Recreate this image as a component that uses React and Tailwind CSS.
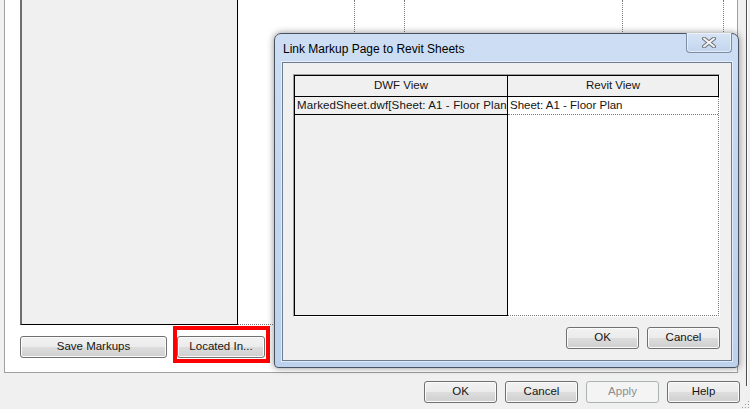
import React from 'react';

const btnBase =
  'h-[22px] rounded-[3px] border text-[11.5px] leading-none flex items-center justify-center shrink-0';
const btnNormal =
  'border-[#707070] text-[#151515] bg-[linear-gradient(#f2f2f2_0%,#ebebeb_49%,#dddddd_50%,#cfcfcf_100%)] shadow-[inset_0_0_0_1px_#fbfbfb]';
const btnDisabled = 'border-[#adb2b5] text-[#8d8d8d] bg-[#f4f4f4]';

const WinButton = ({ children, className = 'w-[73px]', disabled }) => (
  <button
    type="button"
    disabled={disabled}
    className={`${btnBase} ${className} ${disabled ? btnDisabled : btnNormal}`}
  >
    {children}
  </button>
);

const CloseGlyph = () => (
  <svg width="14" height="11" viewBox="0 0 14 11">
    <path d="M2 1.5 L12 9.5 M12 1.5 L2 9.5" stroke="#6f7378" strokeWidth="4" strokeLinecap="round" />
    <path d="M2 1.5 L12 9.5 M12 1.5 L2 9.5" stroke="#f4f6f8" strokeWidth="2" strokeLinecap="round" />
  </svg>
);

const SizeGrip = () => (
  <svg width="9" height="9" viewBox="0 0 9 9" className="absolute right-0 bottom-0">
    {[
      [7, 1],
      [7, 4],
      [4, 4],
      [7, 7],
      [4, 7],
      [1, 7],
    ].map(([x, y]) => (
      <g key={`${x}-${y}`}>
        <rect x={x + 0.5} y={y + 0.5} width="1" height="1" fill="#ffffff" />
        <rect x={x} y={y} width="1" height="1" fill="#9a9a9a" />
      </g>
    ))}
  </svg>
);

const LinkSheetsDialog = () => (
  <div className="absolute left-[274px] top-[33px] w-[465px] h-[335px] flex flex-col rounded-t-[7px] rounded-b-[4px] border border-[#4a5260] bg-[linear-gradient(180deg,#cddef4_0%,#c3d7f0_40%,#bdd2ed_100%)] shadow-[0_0_7px_rgba(0,0,0,0.45)]">
    <div className="relative h-[28px] flex items-center pl-[8px] pt-[1px] text-[12px] text-black">
      Link Markup Page to Revit Sheets
      <div className="absolute right-[6px] -top-px w-[46px] h-[20px] flex items-center justify-center rounded-b-[4px] border-x border-b border-[#7d8da5] bg-[linear-gradient(180deg,#d7e4f5,#c2d5ee)] shadow-[inset_0_0_0_1px_rgba(255,255,255,0.5)]">
        <CloseGlyph />
      </div>
    </div>

    <div className="flex-1 ml-[7px] mr-[6px] mb-[6px] border border-[#6d7c90] bg-[#f0f0f0] pl-[10px] pt-[11px] pr-[11px] flex flex-col shadow-[0_0_0_1px_rgba(255,255,255,0.55)]">
      {/* view mapping table */}
      <div className="w-[427px] h-[243px] border-t border-l border-[#a0a0a0] border-b border-r border-b-white border-r-white flex text-[11.5px]">
        <div className="w-[214px] flex flex-col border-l border-r border-b border-black bg-[#f0f0f0]">
          <div className="h-[22px] flex items-center justify-center border-t border-b border-black">DWF View</div>
          <div className="h-[18px] flex items-center px-[2px] border-b border-black whitespace-nowrap overflow-hidden tracking-[0.12px]">
            MarkedSheet.dwf[Sheet: A1 - Floor Plan]
          </div>
          <div className="flex-1" />
        </div>
        <div className="flex-1 flex flex-col">
          <div className="h-[22px] flex items-center justify-center border-t border-b border-r border-black bg-[#f0f0f0]">
            Revit View
          </div>
          <div className="flex-1 flex flex-col bg-white border-r border-b border-dotted border-[#7a7a7a]">
            <div className="h-[18px] flex items-center px-[2px] border-b border-dotted border-[#7a7a7a] whitespace-nowrap">
              Sheet: A1 - Floor Plan
            </div>
          </div>
        </div>
      </div>

      <div className="mt-[10px] flex justify-end gap-[8px]">
        <WinButton className="w-[73px] h-[21px]">OK</WinButton>
        <WinButton className="w-[73px] h-[21px]">Cancel</WinButton>
      </div>
    </div>
  </div>
);

export default function App() {
  return (
    <div className="relative w-[750px] h-[409px] overflow-hidden bg-[#f0f0f0] font-['Liberation_Sans',Arial,sans-serif] text-[11.5px] text-[#151515]">
      <div className="flex h-full">
        <div className="w-[746px] flex flex-col">
          {/* markup page */}
          <div className="ml-[4px] w-[734px] h-[373px] bg-white border-x border-b border-[#a0a0a0] flex flex-col">
            <div className="flex">
              <div className="ml-[15px] w-[218px] h-[325px] bg-[#f0f0f0] border-l-2 border-l-[#6e6e6e] border-r border-b border-r-black border-b-black" />
              <div className="flex-1 h-[325px] flex border-b border-dotted border-[#7a7a7a]">
                <div className="w-[117px] border-r border-dotted border-[#7a7a7a]" />
                <div className="w-[50px] border-r border-dotted border-[#7a7a7a]" />
                <div className="w-[218px] border-r border-dotted border-[#7a7a7a]" />
                <div className="w-[101px] border-r border-dotted border-[#7a7a7a]" />
                <div className="flex-1" />
              </div>
            </div>

            <div className="mt-[11px] ml-[15px] flex gap-[10px]">
              <WinButton className="w-[147px]">Save Markups</WinButton>
              <div className="relative">
                <WinButton className="w-[88px]">Located In...</WinButton>
                <span className="absolute -left-[4px] -right-[5px] -top-[10px] -bottom-[5px] border-4 border-[#ff0000]" />
              </div>
            </div>
          </div>

          <div className="mt-[8px] pr-[6px] flex justify-end gap-[8px]">
            <WinButton>OK</WinButton>
            <WinButton>Cancel</WinButton>
            <WinButton disabled>Apply</WinButton>
            <WinButton>Help</WinButton>
          </div>
        </div>

        <div className="relative flex-1 flex">
          <div className="w-px h-[386px] bg-[#4d4d4d]" />
          <div className="w-px h-[386px] bg-white" />
          <SizeGrip />
        </div>
      </div>

      <LinkSheetsDialog />
    </div>
  );
}
